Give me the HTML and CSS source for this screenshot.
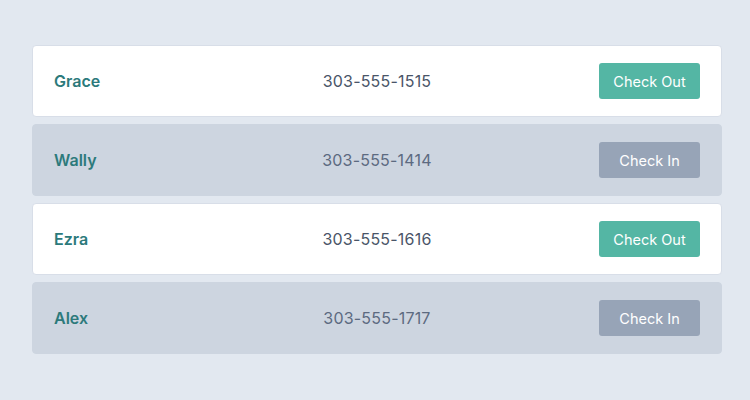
FILE: index.html
```html
<!DOCTYPE html>
<html>
<head>
<meta charset="utf-8">
<link rel="stylesheet" href="styles.css">
</head>
<body>
<div class="list">
  <div class="row">
    <div class="name">Grace</div>
    <div class="phone">303-555-1515</div>
    <button class="btn out">Check Out</button>
  </div>
  <div class="row in">
    <div class="name">Wally</div>
    <div class="phone">303-555-1414</div>
    <button class="btn inbtn">Check In</button>
  </div>
  <div class="row">
    <div class="name">Ezra</div>
    <div class="phone">303-555-1616</div>
    <button class="btn out">Check Out</button>
  </div>
  <div class="row in">
    <div class="name">Alex</div>
    <div class="phone">303-555-1717</div>
    <button class="btn inbtn">Check In</button>
  </div>
</div>
</body>
</html>
```
FILE: styles.css
```css
html, body {
  margin: 0;
  background: #e2e8f0;
  font-family: Inter, "Open Sans", sans-serif;
}
.list {
  padding: 45px 28px 0 32px;
  display: flex;
  flex-direction: column;
  gap: 7px;
}
.row {
  display: grid;
  grid-template-columns: 1fr auto 1fr;
  align-items: center;
  height: 72px;
  box-sizing: border-box;
  padding: 0 21px;
  background: #fff;
  border: 1px solid #d8dee8;
  border-radius: 4px;
}
.row.in {
  background: #cdd5e0;
  border-color: #cdd5e0;
}
.name {
  color: #2c7a7b;
  font-weight: 600;
  font-size: 16px;
}
.phone {
  color: #4a5568;
  font-size: 16px;
  letter-spacing: 0.2px;
}
.row.in .phone {
  color: #5c6a80;
}
.btn {
  justify-self: end;
  width: 101px;
  height: 36px;
  border: none;
  border-radius: 3px;
  color: #fff;
  font-family: inherit;
  font-size: 14.5px;
  padding: 0;
}
.btn.out {
  background: #54b6a4;
}
.btn.inbtn {
  background: #97a4b7;
}
```
